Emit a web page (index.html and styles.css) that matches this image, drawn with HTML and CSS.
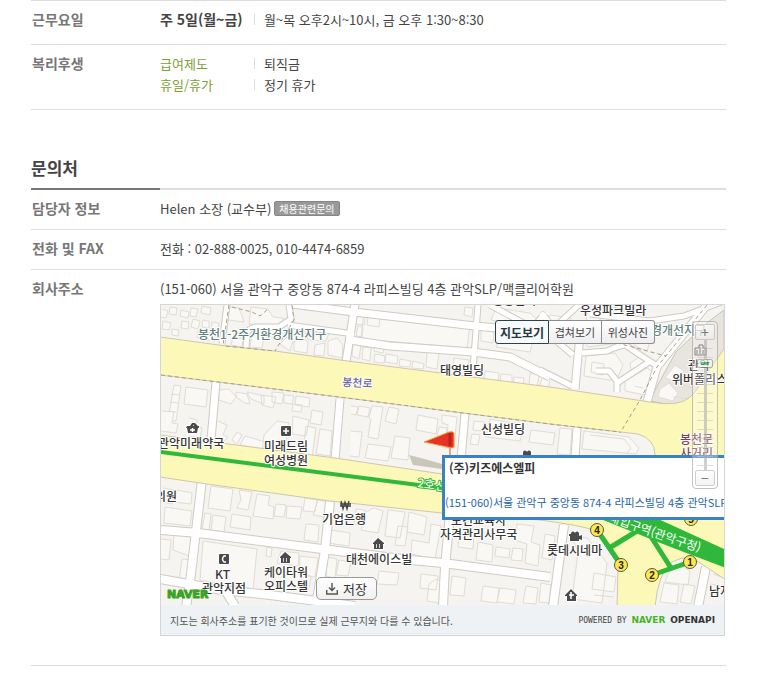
FILE: index.html
```html
<!DOCTYPE html>
<html lang="ko">
<head>
<meta charset="utf-8">
<meta name="viewport" content="width=device-width, initial-scale=1">
<title>채용정보</title>
<link rel="stylesheet" href="styles.css">
</head>
<body>
<main class="page">
  <dl class="rows rows-work">
    <div class="row">
      <dt>근무요일</dt>
      <dd><p class="pair"><strong class="term">주 5일(월~금)</strong><span class="value">월~목 오후2시~10시, 금 오후 1:30~8:30</span></p></dd>
    </div>
    <div class="row">
      <dt>복리후생</dt>
      <dd>
        <p class="pair"><span class="term green">급여제도</span><span class="value">퇴직금</span></p>
        <p class="pair"><span class="term green">휴일/휴가</span><span class="value">정기 휴가</span></p>
      </dd>
    </div>
  </dl>

  <section class="contact">
    <h2>문의처</h2>
    <dl class="rows rows-contact">
      <div class="row">
        <dt>담당자 정보</dt>
        <dd class="person">Helen 소장 (교수부) <button type="button" class="chip">채용관련문의</button></dd>
      </div>
      <div class="row">
        <dt>전화 및 FAX</dt>
        <dd>전화 : 02-888-0025, 010-4474-6859</dd>
      </div>
      <div class="row row-address">
        <dt>회사주소</dt>
        <dd>
          (151-060) 서울 관악구 중앙동 874-4 라피스빌딩 4층 관악SLP/맥클리어학원
          <div class="map-box">
            <div class="map">
              <svg class="map-art" viewBox="161 305 563 300" preserveAspectRatio="xMinYMin slice" role="img" aria-label="회사 위치 지도">
                <rect x="161" y="305" width="563" height="300" fill="#f6f4f0"/>
                <!-- shaded complex -->
                <path d="M693 336L708 322L724 310V350L699 390Q690 405 672 405L650 401L656 388L676 352Z" fill="#e8e4de" stroke="#c9c3bc"/>
                <!-- building outlines -->
                <g class="buildings">
                  <path d="M162 309l6 2-2 7-5-1M170 307l7 1-1 7-7-1zM181 310l8 2-1 6-8-2zM191 308l7 1-2 8-6-1zM202 306l9 2-1 7-9-2zM182 321l7 1-1 7-7-1zM193 319l7 2-2 8-7-2zM203 320l6 1v7l-7-1zM212 322l7 1-1 8-7-1zM172 329l7 1-1 6-6-1zM198 331l6 1-1 7-6-2zM208 332l7 1v8l-8-1zM163 321l8 2-2 7-7-1z"/>
                  <path d="M228 307l11 1 5 14-16-2zM251 307l17 2 5 8 10 1-1 8-33-2zM233 338l10 1-1 8-11-2zM252 334l12 1-2 13-12-1zM280 344l7-7 6 4-3 10zM294 342l9-4 5 4-1 11-13-2zM304 329l25 4-3 8-18-1zM315 345l10-2-1 13-10-1zM328 341l9-3 6 7-1 13-14-3z"/>
                  <path d="M181 386l-7-1-6 35 8 1 5-35M171 394l8 1M170 402l8 1M168 411l8 1M186 387l22 3-2 17-22-3zM219 390l10-1 7 8-5 7-12-4zM236 392l11 2 3 10-5-1-9-6zM247 392l17 4v8l-13-5zM261 395l15 2-3 11-11-3zM272 392l12 1-2 11-10-2zM284 395l10 1-2 8-8-1zM296 396l14 2-1 9-14-2zM293 404l9 1-1 7-9-1zM312 410l11 2-2 13-11-2zM293 416l16 4-3 16-14-2zM277 421l12 2-5 33-22-3 2-18zM215 420l12 5-4 10 5 2-12 12M237 432l5 3-5 9-5-4zM245 436l20 6-1 7-24-4zM306 426l10 2-4 30-10-1zM320 429l12 2-2 25-14-2z"/>
                  <path d="M162 411l12 1-2 11 6 1-2 9-15-2M189 418l8 2-1 7 6 1-2 10-11-2M358 314l8 1-2 10-9-1zM368 315l12 2-1 10-12-2zM358 326l5 1-1 10-6-1zM364 311l106 13-3 24-106-9zM353 344l8 1-2 14-7-3zM363 347l8 1-1 13-8-2zM374 345l10 1-1 7-9-2zM375 354l10 2-1 7-10-1zM386 354l12 2-1 8-12-2zM400 359l11 2-1 6-11-1zM413 361l11 3-1 5-11-1zM427 352l12 1-2 16-11-2zM454 358l15 2-2 10-14-2zM465 307l8 1-1 9-8-2z"/>
                  <path d="M485 371l14 2-1 9-14-2zM501 374l11 1v8l-12-1zM514 377l10 1-1 8-10-1zM530 373l9 2-2 13-8-1zM542 378l8 2-2 9-9-1zM481 329l13 2-1 12-12-2zM496 308l34 5 19 17-58-10zM501 335l32 5-3 12-34-5zM550 315l21 3-5 13-24-3zM553 320l10 8M588 308l13 1-1 15-14-2zM610 307l15 2-4 8-12-1zM587 332l34 5-2 6-32 4zM630 318l28 8-9 13-26-10zM636 335l14 6-3 10-12-5zM586 356l29-3 8 12-7 16-32-5zM592 362l12 2-1 11-12-3zM630 363l14-9 7 7-19 16zM625 381l22-13 7 5-9 22-20-4zM635 386l8 2M660 389l9-6 9 10-5 8-15-4zM673 397l19 2M681 384l23 9M665 378l12 4 7-11-9-6z"/>
                  <path d="M351 406l7 1-2 8-5-1M359 406l11 2-2 9-11-2zM372 406l11 1-5 32-10-2 3-18-2-1zM389 407l10 2-3 15-11-3zM418 415l20 4-2 15-20-4zM442 415l15 2-3 31-8-1 2-22-6-2zM351 431l11 1-3 25-9-1M368 444l23 3-3 14-23-3zM395 436l15 2-2 22-17-2zM439 427l8 1-1 10-9-1zM474 421l10 1-1 9-10-1zM472 434l8 1-2 10-8-1zM490 419l34 6-4 16-34-4zM531 430l24 3-2 12-24-3zM560 428l12 1-2 26-13-1zM584 431l45 6 10 11-3 6-54-5zM590 435l34 4 7 9-5 6"/>
                  <path d="M163 488l11 2-2 14-11-2M177 490l15 3-1 11-17-2zM165 507l27 4-2 15-26-3zM211 486l22 3-3 22-22-3zM239 490l13 2-4 18-11-2 4-8zM257 494l13 2-2 9 6 2-1 12-20-3zM276 504l10 1-2 12-10-1zM287 506l15 1-2 12-14-1zM305 498l12 2-2 12-12-1zM205 513l6 1-2 17-7-1zM213 515l13 2-2 15-13-2zM232 514l19 3-1 13-20-3zM306 524l13 1-1 17-14-2zM318 500l10 2-3 15-12-2zM161 539l10 1-2 20-8-1M174 534l18 3-3 19-16-6zM182 559l10 1-2 22-11-1zM203 541l54 8-4 40-53-9zM267 547l5 1-1 9-5-1zM281 551l18 2-1 13-21-3zM300 556l18 2-3 19-16-2zM286 571l25 5-2 13-24-4zM331 530l19 3-1 13-22-3zM327 557l10 2-2 19-9-2zM339 560l12 2-3 14-12-1z"/>
                  <path d="M356 509l9 1-2 16-9-2zM366 512l8-4 9 3-5 22-17-3zM388 510l17 2-5 26-15-2zM398 526l10 1-3 19-10-1zM409 512l18 5-3 18-17-3zM412 540l17 3 2-19 10 2-6 33-24-5zM379 571l20 2-2 12-20-1zM421 574l17 2-2 14-16-2zM436 579l6 2-2 22-13-2 2-17zM452 576l14 2-2 18-14-1zM483 586l16 2-2 15-16-2zM500 588l16 2-2 14-17-2zM526 586l12 2-2 16-13-1zM460 530l14 3-1 16-15-2zM478 542l15 3-1 17-16-2zM496 547l14 2-1 9-14-2zM513 548l10 1-1 12-11-1zM517 524l17 2-3 16 9 3-2 21-13-3 2-19-12-4zM545 534l10 2-3 24-10-2zM572 536l15 2 20 25-5 40-30-4 6-46zM594 573l22 4-2 15-22-3zM594 595l20 2M541 583l10 2-2 18-10-1zM668 574l11-9 11 6-2 14-23-3zM664 583l15 2-2 19-17-2zM684 584l11 2-4 18-11-2zM713 574l9 3M710 584l13 2"/>
                </g>
                <!-- side streets: casing, then surface -->
                <g class="casing">
                  <path class="w1" d="M227 305L222 344M246 348L247 333Q249 328 256 327L279 327L291 319L289 305M288 325L347 333M347 334L354 336M478 305L473 369M555 340L573 355M540 370L572 386M582 353L607 351Q617 346 625 345L657 366M596 371H609L617 381V392M617 383L649 362M490 305L540 332M580 304L546 335M541 313L562 337M590 314L650 321L684 316L724 301M545 313L535 325"/>
                  <path class="w2" d="M292 304L354 312L475 326L550 333M355 304L346 362M350 340L390 346L473 352L510 357L550 377M580 335L575 389M707 305L657 367L647 402M465 413L461 460M577 428L575 458M216 382L211 440M340 399L335 460"/>
                  <path class="w3" d="M202 480L190 582L186 607M161 530L198 533L322 549L410 560L443 563L550 577M330 502L325 550L317 600M450 514L445 567L443 607M160 579L222 590L270 595L355 606M225 590L235 606M564 525L553 607M706 567L698 607"/>
                </g>
                <g class="street">
                  <path class="w1" d="M227 305L222 344M246 348L247 333Q249 328 256 327L279 327L291 319L289 305M288 325L347 333M347 334L354 336M478 305L473 369M555 340L573 355M540 370L572 386M582 353L607 351Q617 346 625 345L657 366M596 371H609L617 381V392M617 383L649 362M490 305L540 332M580 304L546 335M541 313L562 337M590 314L650 321L684 316L724 301M545 313L535 325"/>
                  <path class="w2" d="M292 304L354 312L475 326L550 333M355 304L346 362M350 340L390 346L473 352L510 357L550 377M580 335L575 389M707 305L657 367L647 402M465 413L461 460M577 428L575 458M216 382L211 440M340 399L335 460"/>
                  <path class="w3" d="M202 480L190 582L186 607M161 530L198 533L322 549L410 560L443 563L550 577M330 502L325 550L317 600M450 514L445 567L443 607M160 579L222 590L270 595L355 606M225 590L235 606M564 525L553 607M706 567L698 607"/>
                </g>
                <!-- main roads -->
                <g fill="#fcf8b8" stroke="#cfc6ae">
                  <path fill-rule="evenodd" d="M160 337L226 346L275 351L355 362L550 387L650 402Q678 407 689 398Q697 391 705 376L726 346V580L691 557Q681 557 672 562Q658 573 655 607H617L618 570Q618 563 611 550L597 531Q580 525 540 520L442 513L330 501L200 483L160 477V435L335 458L442 474L642 510L655 455Q655 439 638 434L550 424L463 413L355 399L218 382L160 375Z"/>
                </g>
                <g fill="none" stroke="#a99d83" stroke-dasharray="4 3">
                  <path d="M161 375L218 382L355 399L463 413L550 424L620 432M226 346L275 351M707 305L657 367L640 400L620 433M229 305L223 345M232 307L252 312L260 316L268 309M292 305L294 320L275 351M610 341L666 356"/>
                </g>
                <path d="M409 455L421 458L442 464V469L413 465Z" fill="#c9c7bb"/>
                <!-- subway line and exits -->
                <path d="M161 452L442 488" fill="none" stroke="#2fb83a" stroke-width="4"/>
                <path d="M598 518H656L726 550V568L668 546Z" fill="#2fb83a"/>
                <path d="M597 530L621 565M611 547L642 528M648 532L671 568M652 575L690 562" fill="none" stroke="#2fb83a" stroke-width="5"/>
                <g class="exit">
                  <circle cx="597" cy="530" r="6.5"/><circle cx="621" cy="565" r="6.5"/><circle cx="652" cy="575" r="6.5"/><circle cx="690" cy="562" r="6.5"/><circle cx="691" cy="519" r="6.5"/>
                  <text x="597" y="534">4</text><text x="621" y="569">3</text><text x="652" y="579">2</text><text x="690" y="566">1</text><text x="691" y="523">5</text>
                </g>
                <text class="station" transform="translate(608 521) rotate(19)">대입구역(관악구청)</text>
                <text class="line-name" transform="translate(417 487) rotate(8)">2호선</text>
                <!-- place icons -->
                <g fill="#4b4a4c" stroke="#fff" stroke-width="2" paint-order="stroke">
                  <path d="M187 426h3l2-3h2l-1 3h1l-1-3h2l3 3h1v2h-1l-1 5h-9l-1-5h-1z"/>
                  <rect x="281" y="426" width="10" height="10" rx="1"/>
                  <rect x="219" y="554" width="10" height="10" rx="1"/>
                  <path d="M280 557l5-5 6 5v1h-1v5h-9v-5h-1zM373 543l5-5 6 5v1h-1v5h-9v-5h-1z"/>
                  <path d="M565 595l6-6 6 6v1h-1v5h-9v-5h-2z"/>
                  <path d="M571 534a2 2 0 1 1 4-1a2 2 0 1 1 4 1v2l3-1v5l-3-1v2h-9v-5h-1v-2z"/>
                  <path d="M523 453a2 2 0 1 1 4-1a2 2 0 1 1 4 1v5h-8z"/>
                </g>
                <path d="M192.500 428v4M190 430h5M286 428v6M283 431h6M571 592v7M569 595h5" fill="none" stroke="#fff" stroke-width="1.6"/>
                <path d="M226 556h-2q-3 3 0 6h2M283 559h1m2 0h1M283 561h1m2 0h1M376 545h1m2 0h1M376 547h1m2 0h1" fill="none" stroke="#fff" stroke-width="1.4"/>
                <path d="M341 501l2 8 2-7 2 7 2-8M340 504h11M340 506h11" fill="none" stroke="#444" stroke-width="1.3"/>
                <path d="M695 355v-7h4v-3h4v3h3v7zM697 350v4M700 347v7M703 350v4" fill="none" stroke="#555"/>
                <!-- place names -->
                <g class="district">
                  <text x="198" y="339">봉천1-2주거환경개선지구</text>
                  <text x="651" y="335">경개선지구</text>
                </g>
                <text class="road-name" transform="translate(342 386) rotate(3)">봉천로</text>
                <g class="place">
                  <text x="492" y="305">행정센터</text><text x="580" y="315">우성파크빌라</text><text x="440" y="375">태영빌딩</text><text x="481" y="434">신성빌딩</text>
                  <text x="688" y="370">관악</text><text x="672" y="384">위버폴리스</text>
                  <text x="158" y="448">관악미래약국</text><text x="264" y="451">미래드림</text><text x="264" y="465">여성병원</text>
                  <text x="155" y="501">의원</text><text x="322" y="524">기업은행</text><text x="346" y="564">대천에이스빌</text>
                  <text x="215" y="579">KT</text><text x="202" y="593">관악지점</text><text x="264" y="577">케이타워</text><text x="264" y="591">오피스텔</text>
                  <text x="451" y="525">보건교육사</text><text x="440" y="539">자격관리사무국</text><text x="547" y="555">롯데시네마</text><text x="709" y="596">남지</text>
                </g>
                <g class="crossing"><text x="680" y="444">봉천로</text><text x="680" y="458">사거리</text></g>
                <!-- office flag -->
                <path d="M450 447V458" stroke="#d8a98b" stroke-width="2"/>
                <path d="M424 442L449 432Q453 431 454 433V447Q452 449 447 447Z" fill="#e73325" stroke="#f1a33b"/>
                <path d="M450 433V446" stroke="#bc211d" stroke-width="3"/>
                <text class="naver-mark" x="167" y="598">NAVER</text>
              </svg>
              <div class="balloon">
                <strong>(주)키즈에스엘피</strong>
                <p>(151-060)서울 관악구 중앙동 874-4 라피스빌딩 4층 관악SLP/맥클리어학원</p>
              </div>
              <div class="views">
                <button type="button" class="view current">지도보기</button>
                <button type="button" class="view">겹쳐보기</button>
                <button type="button" class="view">위성사진</button>
              </div>
              <div class="zoomer">
                <button type="button" class="step" aria-label="확대">+</button>
                <input type="range" class="level" min="1" max="14" value="12" aria-label="지도 배율">
                <button type="button" class="step" aria-label="축소">−</button>
              </div>
              <button type="button" class="save">
                <svg width="12" height="12" viewBox="0 0 12 12" aria-hidden="true"><path d="M6 0V7M3 4.500L6 7.500L9 4.500M.7 7V11H11.300V7" fill="none" stroke="#555" stroke-width="1.4"/></svg>
                저장
              </button>
            </div>
            <div class="map-foot">
              <span>지도는 회사주소를 표기한 것이므로 실제 근무지와 다를 수 있습니다.</span>
              <span class="powered">POWERED BY <b class="nv">NAVER</b> <b>OPENAPI</b></span>
            </div>
          </div>
        </dd>
      </div>
    </dl>
  </section>
</main>
</body>
</html>
```
FILE: styles.css
```css
* { box-sizing: border-box; }

body {
  margin: 0;
  background: #fff;
  color: #444;
  font: 13px/21px "Noto Sans CJK KR", sans-serif;
}

button { font-family: inherit; cursor: pointer; }
p, dl, dd, h2 { margin: 0; }

.page { margin: 0 37px 0 31px; }

.rows { border-bottom: 1px solid #ddd; }
.row {
  display: flex;
  padding: 8px 0 10px;
  border-top: 1px solid #ddd;
}
.rows-work .row { padding-bottom: 14px; }

dt {
  flex: 0 0 129px;
  padding-left: 1px;
  color: #777;
  font-size: 14px;
  font-weight: 700;
}
dd { flex: 1; min-width: 0; }

.pair { display: flex; }
.term { width: 94px; white-space: nowrap; }
strong.term { font-size: 14px; }
.value { display: flex; align-items: center; }
.value::before {
  content: "";
  width: 1px;
  height: 11px;
  margin-right: 9px;
  background: #ddd;
}
.green { color: #7a9f35; }

.contact { margin-top: 48px; }
h2 {
  padding-bottom: 10px;
  color: #444;
  font-size: 17px;
  line-height: 20px;
}
.rows-contact {
  border-top: 2px solid;
  border-bottom: 0;
  border-image: linear-gradient(to right, #777 129px, #ddd 129px) 2 0 0;
}
.rows-contact .row:first-child { border-top: 0; }
.rows-contact .row-address { padding-bottom: 29px; border-bottom: 1px solid #ddd; }

.person { display: flex; align-items: center; gap: 3px; }
.chip {
  height: 15px;
  padding: 0 4px;
  border: 1px solid #858585;
  border-radius: 2px;
  background: #999;
  color: #fff;
  font-size: 10px;
  line-height: 13px;
}

.map-box { margin: 5px 1px 0 0; border: 1px solid #d4d6d8; }
.map {
  position: relative;
  height: 300px;
  overflow: hidden;
}
.map-art { display: block; width: 100%; height: 100%; font-family: "Noto Sans CJK KR", sans-serif; }

.buildings { fill: #f9f8f5; stroke: #e0dcd6; }
.casing, .street { fill: none; stroke-linejoin: round; }
.casing { stroke: #cfcac4; }
.street { stroke: #fff; }
.casing .w1 { stroke-width: 7px; }
.casing .w2 { stroke-width: 9px; }
.casing .w3 { stroke-width: 10px; }
.street .w1 { stroke-width: 5px; }
.street .w2 { stroke-width: 7px; }
.street .w3 { stroke-width: 8px; }

.map-art text { paint-order: stroke; stroke: #fff; stroke-width: 2px; stroke-linejoin: round; }
.place { fill: #353535; font-size: 12px; font-weight: 500; }
.district { fill: #62817c; font-size: 12px; font-weight: 500; }
.road-name { fill: #6b6898; font-size: 11px; font-weight: 500; }
.crossing { fill: #84404b; font-size: 12px; font-weight: 500; }
.map-art .line-name { fill: #fff; stroke: #2fb83a; font-size: 12px; }
.map-art .station { fill: #fff; stroke: none; font-size: 12px; }
.exit circle { fill: #ffe94a; stroke: #555; }
.map-art .exit text { fill: #222; stroke: none; font: 700 10px "Liberation Sans", sans-serif; text-anchor: middle; }
.map-art .naver-mark { fill: #39a321; stroke: #39a321; stroke-width: 1px; font: 700 11px "DejaVu Sans", sans-serif; }

.balloon {
  position: absolute;
  top: 150px;
  left: 281px;
  right: -20px;
  height: 65px;
  overflow: hidden;
  border: 3px solid #3a82c6;
  background: #fff;
  color: #1f65aa;
  font-size: 11px;
  line-height: 20px;
  white-space: nowrap;
}
.balloon strong { display: block; padding-left: 4px; color: #333; font-size: 12px; }
.balloon p { margin-top: 14px; font-family: "Liberation Sans Narrow", "Noto Sans CJK KR", sans-serif; }

.views { position: absolute; top: 15px; right: 69px; display: flex; }
.view {
  width: 53px;
  height: 24px;
  padding: 0;
  border: 1px solid #8b8f92;
  border-left-width: 0;
  background: linear-gradient(#fff, #eee);
  color: #444;
  font-size: 11px;
}
.view:last-child { border-radius: 0 3px 3px 0; }
.view.current {
  width: 54px;
  border: 1px solid #2c3f4a;
  border-radius: 3px 0 0 3px;
  background: #f7fafb;
  color: #263640;
  font-size: 12px;
  font-weight: 700;
}

.zoomer {
  position: absolute;
  top: 16px;
  right: 6px;
  display: flex;
  flex-direction: column;
  align-items: center;
  width: 26px;
  height: 168px;
  padding: 2px;
  border: 1px solid #aaa;
  border-radius: 4px;
  background: rgba(255, 255, 255, .4);
  opacity: .7;
}
.step {
  width: 20px;
  height: 16px;
  padding: 0;
  border: 1px solid #bbb;
  border-radius: 2px;
  background: linear-gradient(#fff, #eee);
  color: #444;
  font-size: 14px;
  line-height: 12px;
}
.level {
  flex: 1;
  min-height: 0;
  width: 16px;
  margin: 0;
  appearance: none;
  writing-mode: vertical-lr;
  direction: rtl;
  background:
    linear-gradient(#bbb, #bbb) center / 3px 100% no-repeat,
    repeating-linear-gradient(transparent 0 8px, #d0d0c4 8px 9px);
}
.level::-webkit-slider-thumb {
  appearance: none;
  width: 16px;
  height: 9px;
  border: 1px solid #999;
  border-radius: 2px;
  background: linear-gradient(#3cc14a, #3cc14a) center / 8px 3px no-repeat #f5f5f5;
}

.save {
  position: absolute;
  bottom: 5px;
  left: 155px;
  display: flex;
  align-items: center;
  gap: 5px;
  height: 23px;
  padding: 0 9px;
  border: 1px solid #999;
  border-radius: 5px;
  background: linear-gradient(#fff, #f0f0f0);
  color: #333;
  font-size: 13px;
  line-height: 20px;
}

.map-foot {
  display: flex;
  justify-content: space-between;
  align-items: center;
  height: 30px;
  padding: 0 9px;
  background: #eef2f4;
  color: #555;
  font-size: 10px;
}
.powered { font: 8px/20px "DejaVu Sans Mono", monospace; color: #444; }
.powered b { font-family: "DejaVu Sans", sans-serif; font-size: 9px; color: #333; }
.powered .nv { color: #48b224; }
```
